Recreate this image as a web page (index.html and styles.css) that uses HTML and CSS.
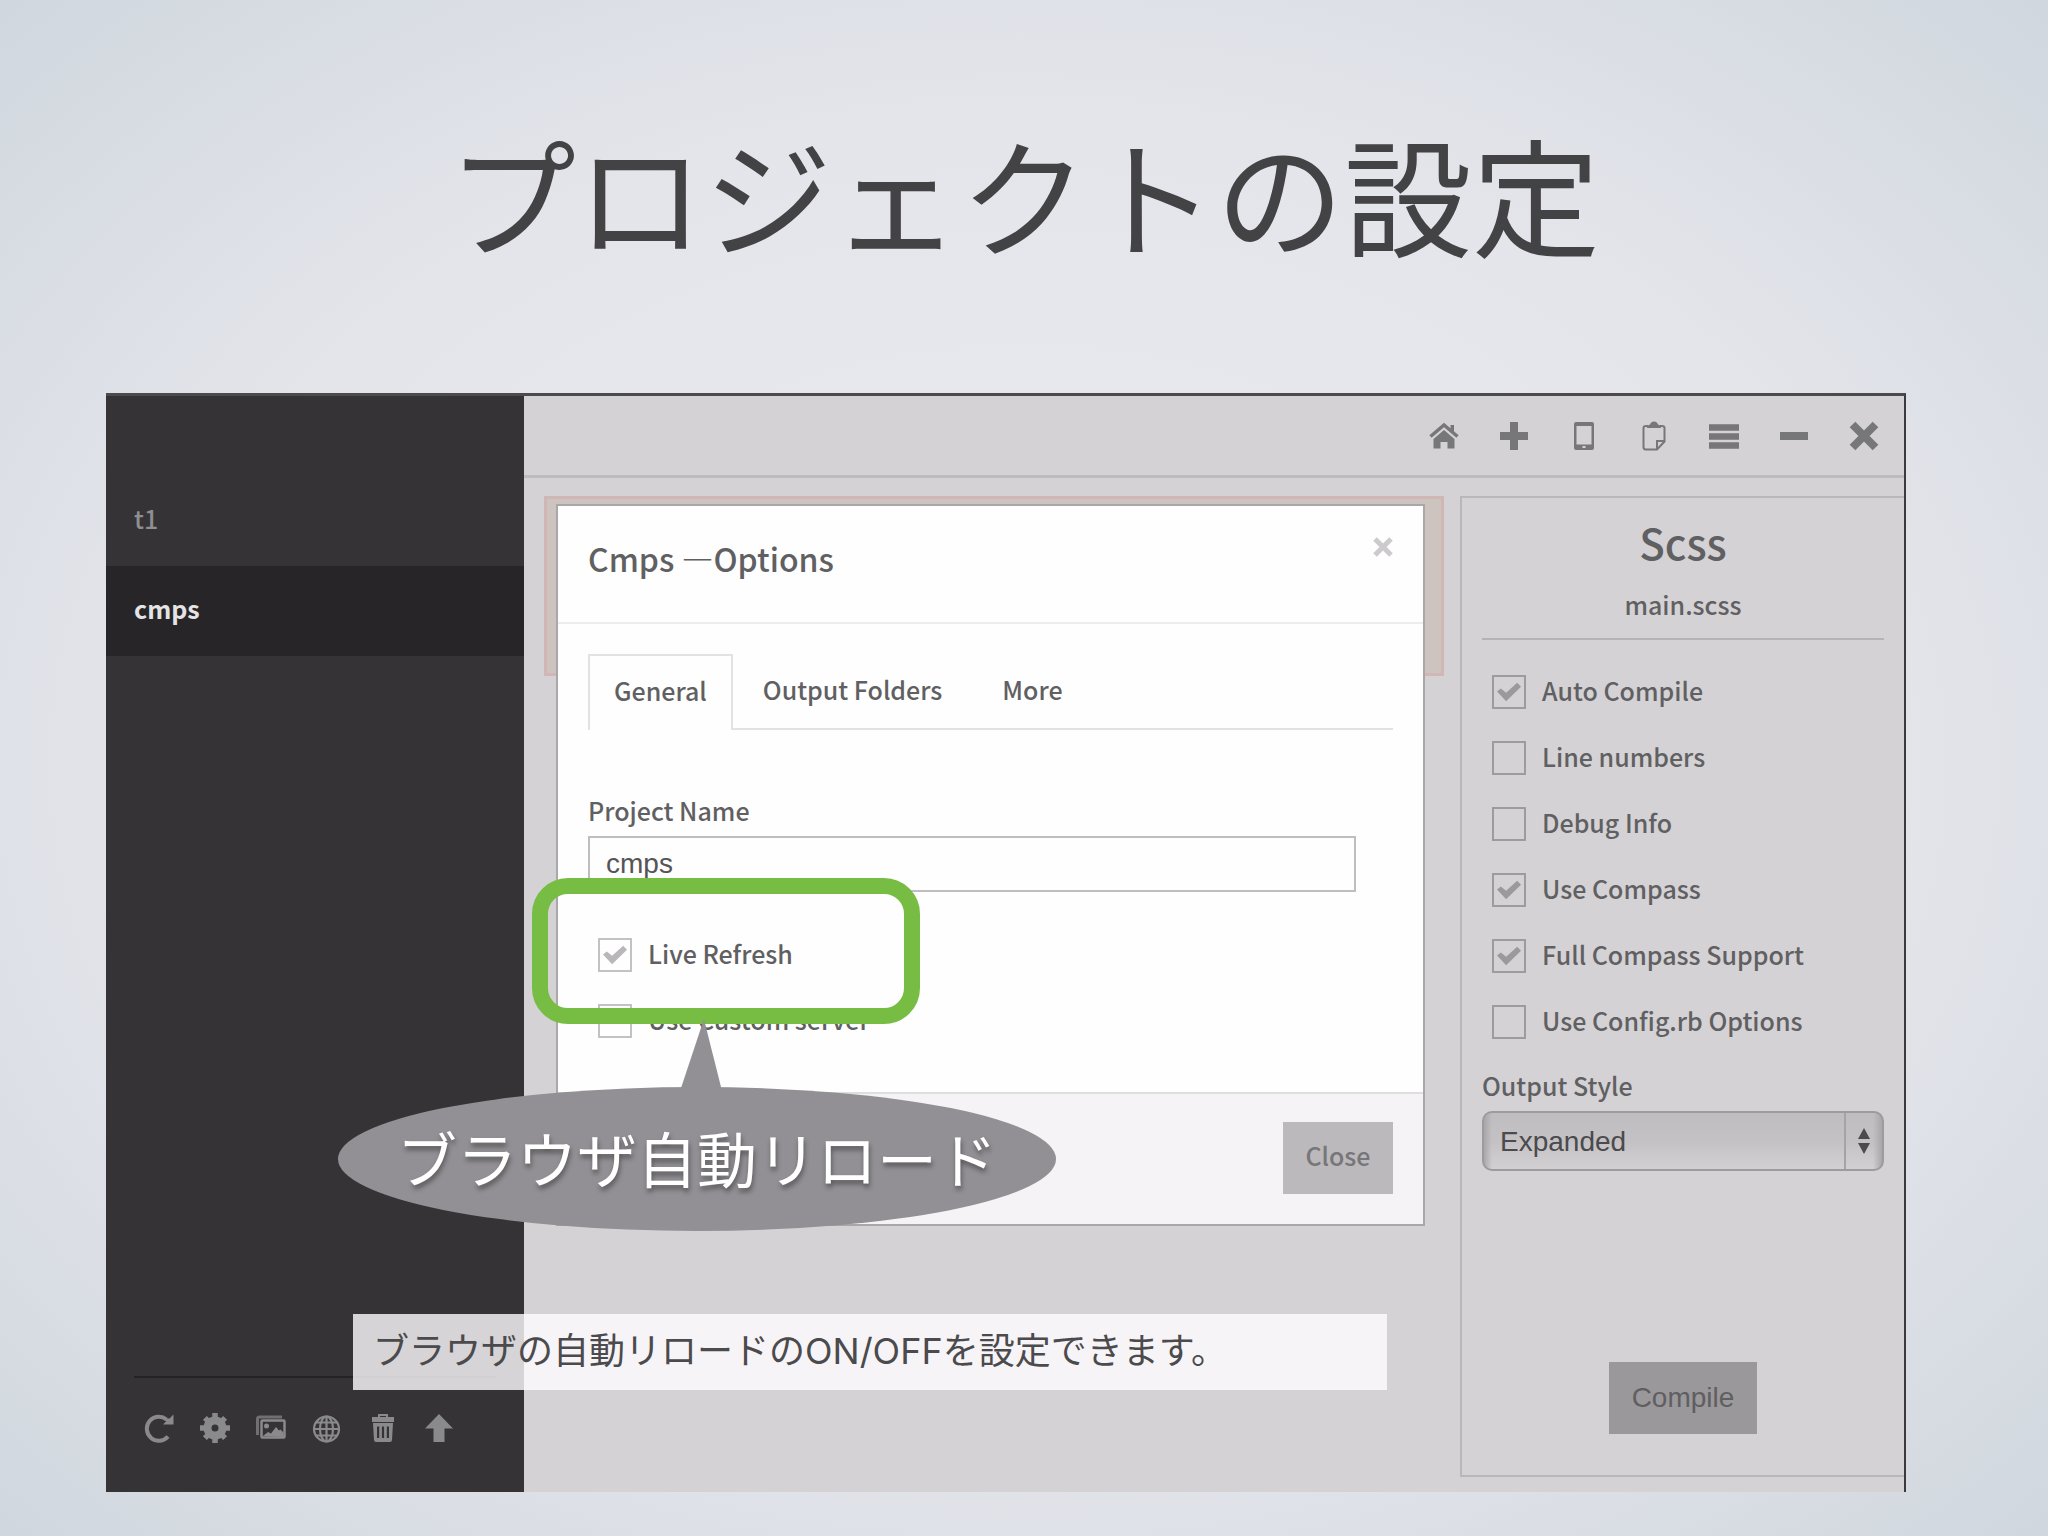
FILE: index.html
```html
<!DOCTYPE html>
<html lang="ja">
<head>
    <meta charset="UTF-8">
    <meta name="viewport" content="width=device-width, initial-scale=1.0">
    <title>プロジェクトの設定</title>
    <link rel="stylesheet" href="styles.css">
</head>
<body>
    <h1 class="slide-title">プロジェクトの設定</h1>

    <!-- App Window -->
    <main class="window">
        <!-- Sidebar -->
        <aside class="sidebar">
            <nav class="projects">
                <a class="project" href="#t1">t1</a>
                <a class="project active" href="#cmps">cmps</a>
            </nav>
            <div class="sidebar-tools">
                <button class="tool" type="button" aria-label="Refresh">
                    <svg viewBox="0 0 30 30"><path d="M22.500 6.500A12 12 0 1 0 24 23.500" fill="none" stroke="currentColor" stroke-width="4"/><path d="M29.500 1.500v10H19l3.200-3.200L19.500 5.500h6z" fill="currentColor"/></svg>
                </button>
                <button class="tool" type="button" aria-label="Project settings">
                    <svg viewBox="0 0 30 30"><circle cx="15" cy="15" r="7.500" fill="none" stroke="currentColor" stroke-width="8"/><path d="M15 0v7M15 23v7M0 15h7M23 15h7M4.900 4.900l4.300 4.300M20.800 20.800l4.300 4.300M4.900 25.100l4.300-4.300M20.800 9.200l4.300-4.300" stroke="currentColor" stroke-width="5.500"/></svg>
                </button>
                <button class="tool" type="button" aria-label="Images">
                    <svg viewBox="0 0 30 30"><path d="M1.500 22V6q0-2 2-2H26" fill="none" stroke="currentColor" stroke-width="3" opacity=".7"/><rect x="5.500" y="7.500" width="23" height="17" rx="1" fill="none" stroke="currentColor" stroke-width="2.500"/><circle cx="10.500" cy="13" r="2.500" fill="currentColor"/><path d="M7 23l5-4 3 1.500 5-6.500 3 3.500 1.500-1 3 3V24z" fill="currentColor"/></svg>
                </button>
                <button class="tool" type="button" aria-label="Server">
                    <svg viewBox="0 0 30 30" fill="none" stroke="currentColor" stroke-width="2.200"><circle cx="14.500" cy="16" r="12.500"/><ellipse cx="14.500" cy="16" rx="6.500" ry="12.500"/><path d="M14.500 3v26M2 16h25M4 9.500h21M4 22.500h21"/></svg>
                </button>
                <button class="tool" type="button" aria-label="Delete">
                    <svg viewBox="0 0 30 30" fill="currentColor"><path fill-rule="evenodd" d="M10 4V1h10v3h6v5H4V4zM12 3v1h6V3z"/><path fill-rule="evenodd" d="M5 10h20l-1 17q-.2 2-2 2H8q-1.800 0-2-2zM9 13.500V25h2.200V13.500zM13.900 13.500V25h2.200V13.500zM18.800 13.500V25H21V13.500z"/></svg>
                </button>
                <button class="tool" type="button" aria-label="Upload">
                    <svg viewBox="0 0 30 30"><path d="M15 1l14 14.500h-8.500V29h-11V15.500H1z" fill="currentColor"/></svg>
                </button>
            </div>
        </aside>

        <div class="workspace">
            <!-- Toolbar -->
            <header class="toolbar">
                <button class="tool" type="button" aria-label="Home">
                    <svg viewBox="0 0 30 30"><path d="M1.500 15.500L15 4l13.500 11.500" fill="none" stroke="currentColor" stroke-width="3.500"/><path d="M21.500 4H25v7l-3.500-3zM15 9l10.500 9v9.500H18.500V21h-7v6.500H4.500V18z" fill="currentColor"/></svg>
                </button>
                <button class="tool" type="button" aria-label="Add project">
                    <svg viewBox="0 0 30 30"><path d="M15 1v28M1 15h28" stroke="currentColor" stroke-width="8"/></svg>
                </button>
                <button class="tool" type="button" aria-label="Device">
                    <svg viewBox="0 0 30 30"><path fill-rule="evenodd" d="M7 1h16q2 0 2 2v24q0 2-2 2H7q-2 0-2-2V3q0-2 2-2zM7.500 5v18.500h15V5zM13.500 25v2h3v-2z" fill="currentColor"/></svg>
                </button>
                <button class="tool" type="button" aria-label="Clipboard">
                    <svg viewBox="0 0 30 30"><path d="M9 5H7Q4.500 5 4.500 7v19q0 2.500 2.500 2.500h11l7.500-8V7q0-2-2.500-2h-2M18 28v-8h7" fill="none" stroke="currentColor" stroke-width="2"/><path d="M8 7q0-3 3-3.500Q12 .5 15 .5t4 3q3 .5 3 3.500z" fill="currentColor"/></svg>
                </button>
                <button class="tool" type="button" aria-label="Menu">
                    <svg viewBox="0 0 30 30"><path d="M0 6.500h30M0 15.500h30M0 24.500h30" stroke="currentColor" stroke-width="6.500"/></svg>
                </button>
                <button class="tool" type="button" aria-label="Minimize">
                    <svg viewBox="0 0 30 30"><path d="M1 15h28" stroke="currentColor" stroke-width="8"/></svg>
                </button>
                <button class="tool" type="button" aria-label="Close window">
                    <svg viewBox="0 0 30 30"><path d="M3.500 3.500l23 23M26.500 3.500l-23 23" stroke="currentColor" stroke-width="8"/></svg>
                </button>
            </header>

            <div class="panes">
                <section class="files">
                    <div class="file-error"></div>
                </section>

                <!-- Inspector -->
                <section class="inspector">
                    <h2 class="file-type">Scss</h2>
                    <p class="file-name">main.scss</p>
                    <div class="checks">
                        <label class="check"><input type="checkbox" checked>Auto Compile</label>
                        <label class="check"><input type="checkbox">Line numbers</label>
                        <label class="check"><input type="checkbox">Debug Info</label>
                        <label class="check"><input type="checkbox" checked>Use Compass</label>
                        <label class="check"><input type="checkbox" checked>Full Compass Support</label>
                        <label class="check"><input type="checkbox">Use Config.rb Options</label>
                    </div>
                    <label class="field-label" for="outputStyle">Output Style</label>
                    <div class="select-box">
                        <select id="outputStyle">
                            <option>Expanded</option>
                            <option>Nested</option>
                            <option>Compact</option>
                            <option>Compressed</option>
                        </select>
                        <svg class="select-arrows" viewBox="0 0 12 26"><path d="M6 0l6 11H0zM6 26L0 15h12z" fill="currentColor"/></svg>
                    </div>
                    <button class="btn compile" type="button">Compile</button>
                </section>
            </div>
        </div>

        <!-- Options Dialog -->
        <div class="modal" role="dialog" aria-labelledby="modalTitle">
            <div class="modal-header">
                <h2 id="modalTitle">Cmps —Options</h2>
                <button class="modal-x" type="button" aria-label="Dismiss">
                    <svg viewBox="0 0 20 20"><path d="M2 2l16 16M18 2L2 18" stroke="currentColor" stroke-width="5"/></svg>
                </button>
            </div>
            <div class="modal-body">
                <div class="tabs" role="tablist">
                    <button class="tab active" type="button" role="tab">General</button>
                    <button class="tab" type="button" role="tab">Output Folders</button>
                    <button class="tab" type="button" role="tab">More</button>
                </div>
                <label class="field-label" for="projectName">Project Name</label>
                <input class="text-input" id="projectName" type="text" value="cmps">
                <div class="checks">
                    <label class="check"><input type="checkbox" checked>Live Refresh</label>
                    <label class="check"><input type="checkbox">Use Custom server</label>
                </div>
            </div>
            <div class="modal-footer">
                <button class="btn close" type="button">Close</button>
            </div>
        </div>

        <!-- Annotations -->
        <div class="highlight"></div>
        <div class="callout">ブラウザ自動リロード</div>
        <p class="caption">ブラウザの自動リロードのON/OFFを設定できます。</p>
    </main>
</body>
</html>
```

FILE: styles.css
```css
/* Reset and Base Styles */
* {
    margin: 0;
    padding: 0;
    box-sizing: border-box;
}

body {
    display: flex;
    flex-direction: column;
    min-height: 100vh;
    padding: 0 142px 44px 106px;
    font-family: "Noto Sans CJK JP", sans-serif;
    font-size: 25px;
    font-weight: 500;
    line-height: 40px;
    color: #606062;
    background: radial-gradient(ellipse at center, #ebebef 0%, #e4e5eb 60%, #d0d7de 100%);
}

button {
    border: 0;
    background: none;
    font: inherit;
    color: inherit;
    cursor: pointer;
}

svg {
    display: block;
}

.slide-title {
    margin-right: -36px;
    padding: 96px 0 104px;
    font-size: 128px;
    font-weight: 400;
    line-height: 193px;
    color: #434345;
    text-align: center;
}

/* App Window */
.window {
    position: relative;
    flex: 1;
    display: flex;
    border-top: 3px solid #4b4a4c;
    border-right: 2px solid #3b3a3d;
    background: #d4d2d5;
}

/* Sidebar */
.sidebar {
    width: 418px;
    display: flex;
    flex-direction: column;
    justify-content: space-between;
    padding-top: 80px;
    background: #353335;
}

.project {
    display: block;
    padding: 22px 28px 28px;
    color: #8f8e90;
    text-decoration: none;
}

.project.active {
    background: #282528;
    color: #e4e3e5;
    font-weight: 700;
}

.sidebar-tools {
    display: flex;
    margin: 0 28px;
    padding: 35px 0 49px;
    border-top: 2px solid #232224;
    color: #8a898b;
}

.sidebar-tools .tool {
    width: 56px;
    padding-left: 10px;
}

.tool svg {
    width: 30px;
    height: 30px;
}

/* Toolbar */
.workspace {
    flex: 1;
    display: flex;
    flex-direction: column;
}

.toolbar {
    display: flex;
    justify-content: flex-end;
    height: 82px;
    padding-right: 5px;
    border-bottom: 3px solid #bdbbbe;
    color: #777678;
}

.toolbar .tool {
    display: flex;
    justify-content: center;
    align-items: center;
    width: 70px;
}

/* Panes */
.panes {
    flex: 1;
    display: flex;
    gap: 16px;
    padding: 18px 0 15px 20px;
}

.files {
    flex: 1;
}

.file-error {
    height: 180px;
    border: 3px solid #d0b7b5;
    background: #cdc4bf;
}

/* Inspector */
.inspector {
    width: 444px;
    display: flex;
    flex-direction: column;
    padding: 16px 20px 20px;
    border: 2px solid #b9b7ba;
    border-right: 0;
}

.file-type {
    font-size: 42px;
    font-weight: 500;
    line-height: 56px;
    text-align: center;
}

.file-name {
    padding: 14px 0;
    border-bottom: 2px solid #b5b3b6;
    text-align: center;
}

.checks {
    padding-left: 10px;
}

.inspector .checks {
    padding-top: 17px;
}

.check {
    display: flex;
    align-items: center;
    gap: 16px;
    height: 66px;
}

.check input {
    appearance: none;
    display: grid;
    place-items: center;
    width: 34px;
    height: 34px;
    margin-top: 4px;
    border: 2px solid #9d9b9e;
}

.check input:checked::before {
    content: "";
    width: 24px;
    height: 20px;
    background: #9b999c;
    clip-path: polygon(0 48%, 16% 32%, 38% 54%, 84% 4%, 100% 24%, 38% 96%);
}

.field-label {
    display: block;
    line-height: 40px;
}

.inspector .field-label {
    padding-top: 12px;
}

.select-box {
    position: relative;
    color: #4b4a4c;
}

.select-box select {
    appearance: none;
    width: 100%;
    height: 60px;
    margin-top: 6px;
    padding: 0 16px;
    border: 2px solid #9d9b9e;
    border-radius: 10px;
    background: linear-gradient(90deg, #a9a7aa, transparent 8px, transparent calc(100% - 38px), #a5a3a6 calc(100% - 38px), #a5a3a6 calc(100% - 36px), transparent calc(100% - 36px), transparent calc(100% - 9px), #a9a7aa), linear-gradient(#bfbdc0, #c3c1c4 50%, #d2d0d3);
    font: 28px "Liberation Sans", sans-serif;
    color: inherit;
}

.select-arrows {
    position: absolute;
    top: 23px;
    right: 14px;
    width: 12px;
    height: 26px;
    pointer-events: none;
}

.btn {
    height: 72px;
    background: #bbb9bc;
    color: #777678;
}

.compile {
    align-self: center;
    width: 148px;
    margin-top: auto;
    margin-bottom: 21px;
    background: #9a989b;
    color: #5f5e60;
    font: 28px "Liberation Sans", sans-serif;
}

/* Options Dialog */
.modal {
    position: absolute;
    top: 108px;
    left: 450px;
    width: 869px;
    border: 2px solid #a9a7aa;
    background: #fefefe;
}

.modal-header {
    display: flex;
    justify-content: space-between;
    align-items: flex-start;
    padding: 28px 30px 39px;
    border-bottom: 2px solid #ededef;
}

.modal-header h2 {
    font-size: 32px;
    font-weight: 500;
    line-height: 49px;
}

.modal-x {
    padding-top: 3px;
    color: #cccacd;
}

.modal-x svg {
    width: 20px;
    height: 20px;
}

.modal-body {
    padding: 30px 30px 40px;
}

.tabs {
    display: flex;
    margin-bottom: 60px;
    border-bottom: 2px solid #e3e1e4;
}

.tab {
    height: 76px;
    margin-bottom: -2px;
    padding: 0 30px 6px;
}

.tab.active {
    padding: 0 24px 6px;
    border: 2px solid #e3e1e4;
    border-bottom: 0;
    background: #fefefe;
}

.text-input {
    width: 768px;
    max-width: 100%;
    height: 56px;
    margin: 6px 0 28px;
    padding: 0 16px;
    border: 2px solid #bfbdc0;
    background: #fefefe;
    font: 28px "Liberation Sans", sans-serif;
    color: #555456;
}

.modal .check input {
    border-color: #c3c1c4;
}

.modal .check input:checked::before {
    background: #b9b7ba;
}

.modal-footer {
    display: flex;
    justify-content: flex-end;
    padding: 28px 30px 30px;
    border-top: 2px solid #dfdde0;
    background: #f5f3f6;
}

.close {
    width: 110px;
    padding-bottom: 6px;
}

/* Annotations */
.highlight {
    position: absolute;
    top: 482px;
    left: 426px;
    width: 388px;
    height: 146px;
    border: 16px solid #77bc43;
    border-radius: 36px;
}

.callout {
    position: absolute;
    top: 691px;
    left: 232px;
    width: 718px;
    height: 144px;
    border-radius: 50%;
    background: #929094;
    font-size: 60px;
    font-weight: 400;
    line-height: 140px;
    color: #fff;
    text-align: center;
    text-shadow: 1px 4px 5px rgba(0, 0, 0, 0.4);
    white-space: nowrap;
}

.callout::before {
    content: "";
    position: absolute;
    top: -68px;
    left: 342px;
    width: 42px;
    height: 72px;
    background: #929094;
    clip-path: polygon(57% 0, 100% 100%, 0 100%);
}

.caption {
    position: absolute;
    top: 918px;
    left: 247px;
    width: 1034px;
    padding: 0 20px 2px;
    background: rgba(255, 253, 255, 0.8);
    font-family: Inter, "Noto Sans CJK JP", sans-serif;
    font-size: 36px;
    font-weight: 400;
    line-height: 74px;
    color: #4b4a4c;
    white-space: nowrap;
}
```
